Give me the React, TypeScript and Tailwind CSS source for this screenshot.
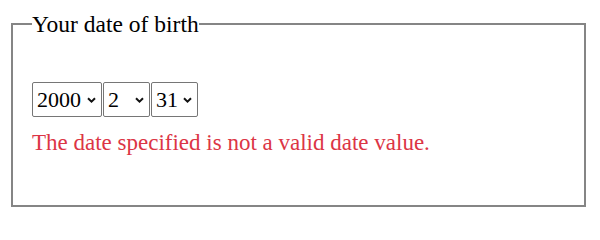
import { useState } from 'react'

const serif = { fontFamily: '"Liberation Serif", "Times New Roman", serif' }

function Chevron() {
  return (
    <svg
      width="9"
      height="6"
      viewBox="0 0 9 6"
      className="pointer-events-none absolute right-[6px] top-1/2 -translate-y-1/2"
    >
      <path d="M1 1.2 L4.5 4.6 L8 1.2" fill="none" stroke="#111" strokeWidth="2" />
    </svg>
  )
}

function DateSelect({ value, options, width, onChange }: { value: string; options: string[]; width: string; onChange: (v: string) => void }) {
  return (
    <div className={`relative ${width}`}>
      <select
        value={value}
        onChange={(e) => onChange(e.target.value)}
        className="h-[35px] w-full appearance-none rounded-[2px] border border-[#767676] bg-white pl-[4px] text-[22px] leading-none text-black outline-none"
        style={serif}
      >
        {options.map((o) => (
          <option key={o} value={o}>
            {o}
          </option>
        ))}
      </select>
      <Chevron />
    </div>
  )
}

const years = Array.from({ length: 30 }, (_, i) => String(1990 + i))
const months = Array.from({ length: 12 }, (_, i) => String(i + 1))
const days = Array.from({ length: 31 }, (_, i) => String(i + 1))

export default function App() {
  const [year, setYear] = useState('2000')
  const [month, setMonth] = useState('2')
  const [day, setDay] = useState('31')

  return (
    <div className="min-h-[223px] w-[600px] bg-white pl-[11px] pt-[11px]" style={serif}>
      <fieldset className="w-[575px] border-2 border-solid border-[#858585] pb-[49px] pl-[19px]">
        <legend className="px-0 text-[23.5px] leading-[26px] text-black">Your date of birth</legend>
        <div className="mt-[45px] flex gap-[1px]">
          <DateSelect value={year} options={years} width="w-[70px]" onChange={setYear} />
          <DateSelect value={month} options={months} width="w-[47px]" onChange={setMonth} />
          <DateSelect value={day} options={days} width="w-[47px]" onChange={setDay} />
        </div>
        <p className="mt-[13px] text-[23px] leading-[26px] text-[#dc3545]">
          The date specified is not a valid date value.
        </p>
      </fieldset>
    </div>
  )
}
